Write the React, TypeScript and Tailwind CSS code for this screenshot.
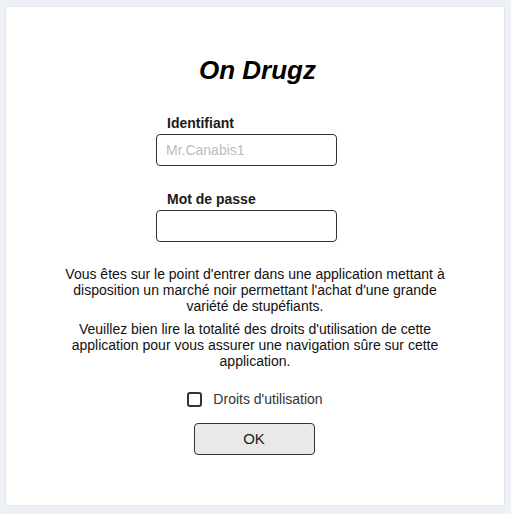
export default function App() {
  return (
    <div className="min-h-screen bg-[#eef1f5] pt-[6px] pl-[5px] pr-[6px] font-['Liberation_Sans',Arial,sans-serif]">
      <div className="h-[500px] bg-white border border-[#e3e6ea] pt-[48px]">
        <h1 className="pl-[5px] text-center text-[26px] leading-[30px] font-bold italic text-black">On Drugz</h1>

        <form className="mt-[30px] ml-[150px] w-[180px]">
          <label htmlFor="identifiant" className="block pl-[11px] mb-[3px] text-[14px] leading-[16px] font-bold text-[#1a1a1a]">
            Identifiant
          </label>
          <input
            id="identifiant"
            type="text"
            placeholder="Mr.Canabis1"
            className="block w-[181px] h-[32px] px-[9px] border border-[#333] rounded-[4px] text-[14px] placeholder:text-[#bdbdbd] outline-none"
          />
          <label htmlFor="password" className="block pl-[11px] mt-[25px] mb-[3px] text-[14px] leading-[16px] font-bold text-[#1a1a1a]">
            Mot de passe
          </label>
          <input
            id="password"
            type="password"
            className="block w-[181px] h-[32px] px-[9px] border border-[#333] rounded-[4px] text-[14px] outline-none"
          />
        </form>

        <div className="mt-[24px] max-w-[400px] mx-auto text-center text-[14px] leading-[16px] text-[#111]">
          <p>
            Vous êtes sur le point d'entrer dans une application mettant à disposition un marché noir permettant
            l'achat d'une grande variété de stupéfiants.
          </p>
          <p className="mt-[7px]">
            Veuillez bien lire la totalité des droits d'utilisation de cette application pour vous assurer une
            navigation sûre sur cette application.
          </p>
        </div>

        <label className="mt-[22px] flex items-center justify-center gap-[11px] text-[14px] leading-[17px] text-[#333]">
          <input
            type="checkbox"
            className="appearance-none w-[15px] h-[15px] border-2 border-[#333] rounded-[3px] bg-white"
          />
          Droits d'utilisation
        </label>

        <div className="mt-[15px] flex justify-center pr-[2px]">
          <button
            type="button"
            className="w-[121px] h-[32px] bg-[#e9e9e9] border border-[#333] rounded-[4px] text-[15px] text-[#222]"
          >
            OK
          </button>
        </div>
      </div>
    </div>
  );
}
